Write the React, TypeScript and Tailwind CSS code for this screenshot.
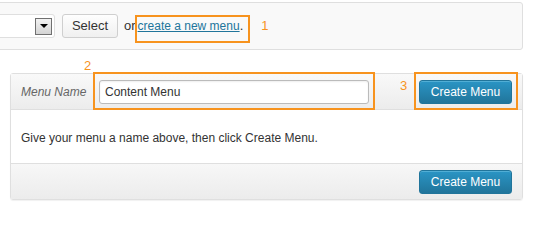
const orange = "border-2 border-[#f7931e]";

function BlueButton({ label }: { label: string }) {
  return (
    <button
      type="button"
      className="h-[24px] w-[93px] rounded-[3px] border border-[#21759b] bg-gradient-to-b from-[#2a95c5] to-[#21759b] text-[12px] leading-none text-white shadow-[inset_0_1px_0_rgba(120,200,230,0.5)]"
    >
      {label}
    </button>
  );
}

export default function App() {
  return (
    <div
      className="h-[219px] w-[535px] overflow-hidden bg-white pt-[2px] text-[12px] leading-[16px] text-[#333]"
      style={{ fontFamily: '"Liberation Sans", Arial, sans-serif' }}
    >
      {/* select / create bar */}
      <div className="ml-[-20px] flex h-[48px] w-[543px] items-center rounded-[3px] border border-[#dfdfdf] bg-[#f9f9f9]">
        <div className="flex h-[24px] w-[74px] items-center justify-end rounded-[3px] border border-[#dfdfdf] bg-white pr-[2px]">
          <div className="flex h-[17px] w-[17px] items-center justify-center border border-[#707070] bg-gradient-to-b from-[#f2f2f2] to-[#d4d4d4]">
            <span className="h-0 w-0 border-x-[4px] border-t-[4px] border-x-transparent border-t-black" />
          </div>
        </div>
        <button
          type="button"
          className="ml-[7px] h-[24px] w-[56px] rounded-[3px] border border-[#cfcfcf] bg-gradient-to-b from-[#fefefe] to-[#f0f0f0] text-[13px] text-[#333]"
        >
          Select
        </button>
        <span className="ml-[6px] text-[13px]">or</span>
        <span className={`ml-[-1px] mt-[5px] flex h-[28px] items-center pl-[1px] pr-[5px] pb-[5px] text-[13px] ${orange}`}>
          <a href="#" className="text-[12px] text-[#21759b] underline">
            create a new menu
          </a>
          .
        </span>
        <span className="ml-[11px] text-[13px] text-[#f7931e]">1</span>
      </div>

      {/* edit panel */}
      <div className="relative ml-[10px] mt-[23px] w-[513px] rounded-[3px] border border-[#dfdfdf] shadow-[0_1px_1px_rgba(0,0,0,0.06)]">
        <div className="flex h-[36px] items-center border-b border-[#dfdfdf] bg-gradient-to-b from-[#f9f9f9] to-[#ececec] px-[10px]">
          <span className="w-[78px] italic text-[#666]">Menu Name</span>
          <input
            readOnly
            value="Content Menu"
            className="h-[24px] w-[270px] rounded-[3px] border border-[#bbb] bg-white px-[5px] text-[12px] text-[#333] shadow-[inset_0_1px_2px_rgba(0,0,0,0.07)] outline-none"
          />
          <span className="ml-auto">
            <BlueButton label="Create Menu" />
          </span>
        </div>
        <div className="flex h-[53px] items-center px-[10px] pt-[3px]">
          Give your menu a name above, then click Create Menu.
        </div>
        <div className="flex h-[36px] items-center justify-end border-t border-[#dfdfdf] bg-gradient-to-b from-[#f7f7f7] to-[#ececec] px-[10px]">
          <BlueButton label="Create Menu" />
        </div>

        {/* annotations */}
        <span className="absolute left-[73px] top-[-16px] text-[13px] leading-[16px] text-[#f7931e]">2</span>
        <div className={`absolute left-[82px] top-[-2px] h-[38px] w-[282px] ${orange}`} />
        <span className="absolute left-[389px] top-[4px] text-[13px] leading-[16px] text-[#f7931e]">3</span>
        <div className={`absolute left-[403px] top-[-2px] h-[38px] w-[104px] ${orange}`} />
      </div>
    </div>
  );
}
